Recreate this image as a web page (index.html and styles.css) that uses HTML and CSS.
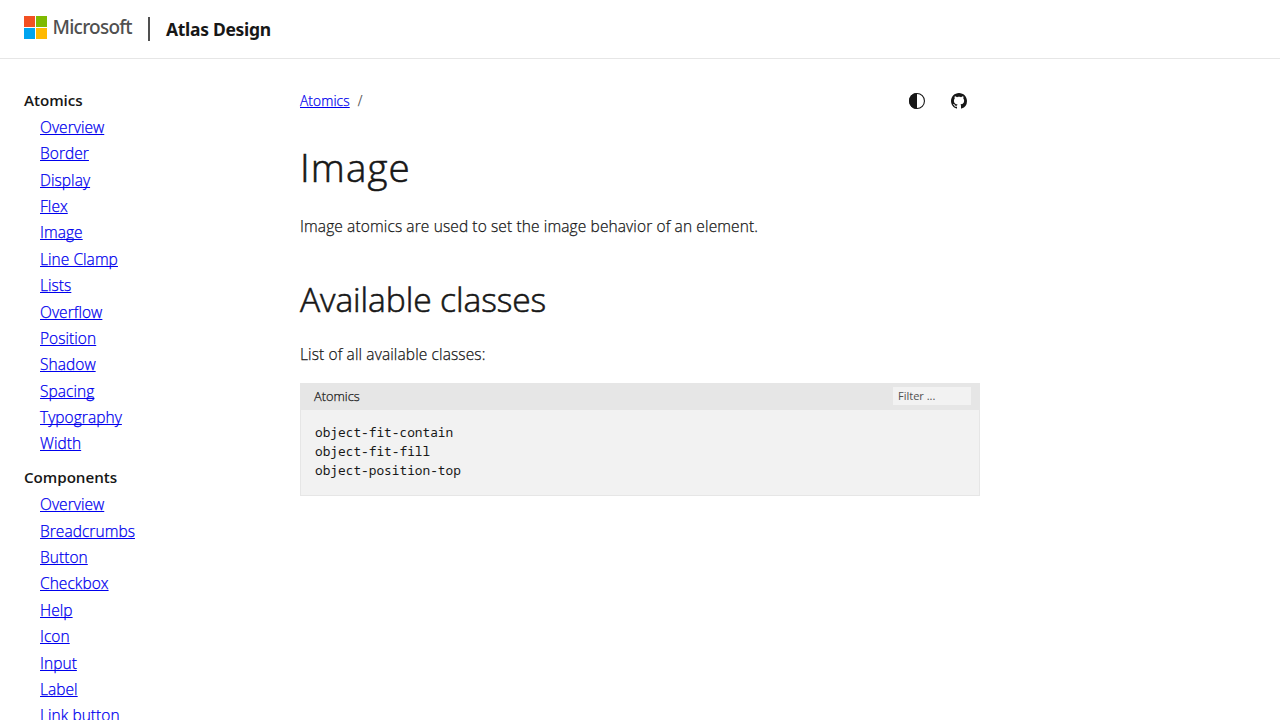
FILE: index.html
```html
<!DOCTYPE html>
<html lang="en">
<head>
<meta charset="utf-8">
<title>Image - Atlas Design</title>
<link rel="stylesheet" href="styles.css">
</head>
<body>
<header class="header">
  <svg class="logo" viewBox="0 0 23 23" aria-hidden="true"><path fill="#f25022" d="M0 0h11v11H0z"/><path fill="#7fba00" d="M12 0h11v11H12z"/><path fill="#00a4ef" d="M0 12h11v11H0z"/><path fill="#ffb900" d="M12 12h11v11H12z"/></svg>
  <span class="wordmark">Microsoft</span>
  <span class="divider"></span>
  <span class="site">Atlas Design</span>
</header>
<div class="layout">
  <nav class="nav">
    <section class="group">
      <h2 class="group-title">Atomics</h2>
      <ul class="links">
        <li><a href="#">Overview</a></li><li><a href="#">Border</a></li><li><a href="#">Display</a></li><li><a href="#">Flex</a></li><li><a href="#">Image</a></li><li><a href="#">Line Clamp</a></li><li><a href="#">Lists</a></li><li><a href="#">Overflow</a></li><li><a href="#">Position</a></li><li><a href="#">Shadow</a></li><li><a href="#">Spacing</a></li><li><a href="#">Typography</a></li><li><a href="#">Width</a></li>
      </ul>
    </section>
    <section class="group">
      <h2 class="group-title">Components</h2>
      <ul class="links">
        <li><a href="#">Overview</a></li><li><a href="#">Breadcrumbs</a></li><li><a href="#">Button</a></li><li><a href="#">Checkbox</a></li><li><a href="#">Help</a></li><li><a href="#">Icon</a></li><li><a href="#">Input</a></li><li><a href="#">Label</a></li><li><a href="#">Link button</a></li>
      </ul>
    </section>
  </nav>
  <main class="main">
    <div class="topline">
      <div class="crumbs"><a href="#">Atomics</a><span class="slash">/</span></div>
      <div class="actions">
        <svg class="icon" viewBox="0 0 16 16"><circle cx="8" cy="8" r="7.45" fill="none" stroke="#171717" stroke-width="1.1"/><path fill="#171717" d="M8 0a8 8 0 0 0 0 16z"/></svg>
        <svg class="icon" viewBox="0 0 16 16"><path fill="#171717" d="M8 0C3.58 0 0 3.58 0 8c0 3.54 2.29 6.53 5.47 7.59.4.07.55-.17.55-.38 0-.19-.01-.82-.01-1.49-2.01.37-2.53-.49-2.69-.94-.09-.23-.48-.94-.82-1.13-.28-.15-.68-.52-.01-.53.63-.01 1.08.58 1.23.82.72 1.21 1.87.87 2.33.66.07-.52.28-.87.51-1.07-1.78-.2-3.64-.89-3.64-3.95 0-.87.31-1.59.82-2.15-.08-.2-.36-1.02.08-2.12 0 0 .67-.21 2.2.82.64-.18 1.32-.27 2-.27s1.36.09 2 .27c1.53-1.04 2.2-.82 2.2-.82.44 1.1.16 1.92.08 2.12.51.56.82 1.27.82 2.15 0 3.07-1.87 3.75-3.65 3.95.29.25.54.73.54 1.48 0 1.07-.01 1.93-.01 2.2 0 .21.15.46.55.38A8.01 8.01 0 0 0 16 8c0-4.42-3.58-8-8-8z"/></svg>
      </div>
    </div>
    <h1 class="title">Image</h1>
    <p class="text intro">Image atomics are used to set the image behavior of an element.</p>
    <h2 class="subtitle">Available classes</h2>
    <p class="text list-label">List of all available classes:</p>
    <div class="code">
      <div class="code-head"><span class="code-name">Atomics</span><input class="filter" type="text" placeholder="Filter ..."></div>
      <pre class="code-body">object-fit-contain
object-fit-fill
object-position-top</pre>
    </div>
  </main>
</div>
</body>
</html>
```
FILE: styles.css
```css
* { box-sizing: border-box; }
body { margin: 0; height: 720px; overflow: hidden; background: #fff; color: #171717; font: 300 15.5px/24px "Open Sans", "Noto Sans", sans-serif; }
h1, h2, p, ul, pre { margin: 0; padding: 0; }
a { color: #00e; text-underline-offset: 1px; text-decoration-thickness: 1px; text-decoration-skip-ink: none; }
.header { display: flex; align-items: flex-start; height: 59px; padding: 16px 24px; border-bottom: 1px solid #e6e6e6; }
.logo { width: 23px; height: 23px; }
.wordmark { margin: -1px 0 0 5.5px; width: 95.5px; color: #505050; font: 500 19px/24px "Noto Sans", sans-serif; letter-spacing: -.75px; white-space: nowrap; }
.divider { width: 2px; height: 24px; margin: 1px 16px 0 0; background: #505050; }
.site { margin-top: 1px; font: 700 17.5px/24px "Noto Sans", sans-serif; letter-spacing: -.3px; }
.layout { display: flex; padding: 0 24px; }
.nav { width: 276px; padding-top: 28px; }
.group { margin-bottom: 8.2px; }
.group-title { font-size: 15.2px; line-height: 26.38px; font-weight: 600; letter-spacing: -.05px; }
.links { padding: .5px 0 0 16px; margin-bottom: -.5px; list-style: none; letter-spacing: .05px; -webkit-text-stroke: .25px; }
.links li { height: 26.38px; line-height: 26.38px; }
.main { width: 680px; }
.topline { display: flex; justify-content: space-between; margin-top: 30px; height: 24px; }
.crumbs { font-size: 13.7px; letter-spacing: .12px; -webkit-text-stroke: .25px; }
.slash { margin-left: 8px; color: #505050; }
.actions { display: flex; gap: 26px; padding: 4px 13px 0 0; }
.icon { width: 16px; height: 16px; }
.title { margin-top: 28px; font-size: 38.5px; line-height: 52px; font-weight: 300; letter-spacing: 1.1px; -webkit-text-stroke: .6px; }
.text { letter-spacing: .12px; -webkit-text-stroke: .25px; }
.intro { margin-top: 21px; }
.subtitle { margin-top: 38px; font-size: 33.6px; line-height: 46px; font-weight: 300; letter-spacing: -.1px; -webkit-text-stroke: .6px; }
.list-label { margin-top: 20px; }
.code { height: 113px; margin-top: 17px; border: 1px solid #e6e6e6; background: #f2f2f2; }
.code-head { display: flex; justify-content: space-between; align-items: center; height: 26px; padding: 0 8px 3px 13px; background: #e6e6e6; font-size: 12.8px; }
.code-name { padding-top: 1px; -webkit-text-stroke: .25px; }
.filter { width: 78px; height: 18px; padding: 0 5px; border: 0; background: #f2f2f2; font: 400 11px "Open Sans", sans-serif; }
.filter::placeholder { color: #505050; }
.code-body { padding: 13px 14px; font: 400 12.8px/19px "Noto Sans Mono", "DejaVu Sans Mono", monospace; }
```
